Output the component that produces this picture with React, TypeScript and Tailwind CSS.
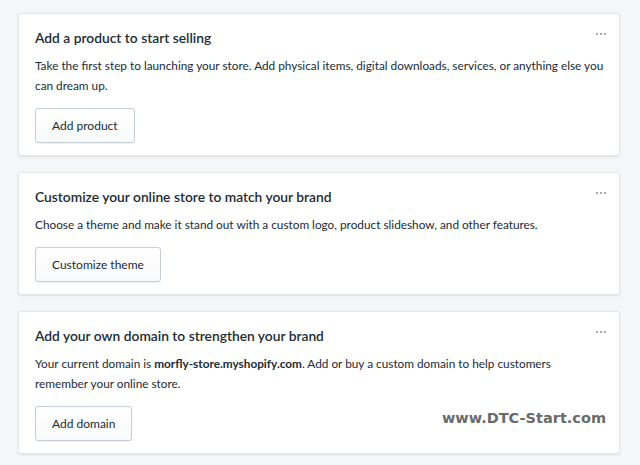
import React from "react";

interface Task {
  title: string;
  body: React.ReactNode;
  action: string;
}

const tasks: Task[] = [
  {
    title: "Add a product to start selling",
    body: "Take the first step to launching your store. Add physical items, digital downloads, services, or anything else you can dream up.",
    action: "Add product",
  },
  {
    title: "Customize your online store to match your brand",
    body: "Choose a theme and make it stand out with a custom logo, product slideshow, and other features.",
    action: "Customize theme",
  },
  {
    title: "Add your own domain to strengthen your brand",
    body: (
      <>
        Your current domain is <span className="font-bold">morfly-store.myshopify.com</span>. Add or buy a custom
        domain to help customers remember your online store.
      </>
    ),
    action: "Add domain",
  },
];

function MoreDots() {
  return (
    <svg width="12" height="4" viewBox="0 0 12 4" className="text-[#8f979f]" fill="currentColor">
      <circle cx="2" cy="2" r="1.1" />
      <circle cx="6" cy="2" r="1.1" />
      <circle cx="10" cy="2" r="1.1" />
    </svg>
  );
}

function TaskCard({ task, watermark }: { task: Task; watermark?: boolean }) {
  return (
    <div className="relative bg-white rounded-[3px] border border-[#e3e6e9] shadow-[0_1px_2px_rgba(63,63,68,0.12)] px-4 py-3">
      <div className="absolute right-[12px] top-[18px]">
        <MoreDots />
      </div>
      <h2 className="text-[13.8px] leading-6 font-semibold text-[#212b36]">{task.title}</h2>
      <p className="mt-[6px] -mr-[2px] text-[11.8px] leading-5 text-[#212b36]">{task.body}</p>
      <div className="mt-3 flex items-end justify-between">
        <button className="h-[35px] px-4 rounded-[3px] border border-[#c4cdd5] bg-gradient-to-b from-white to-[#f9fafb] text-[12px] text-[#212b36] shadow-[0_1px_0_rgba(22,29,37,0.05)]">
          {task.action}
        </button>
        {watermark && (
          <span className="mb-[11px] mr-[-3px] text-[14.5px] font-bold text-[#6a6a6a] [font-family:'DejaVu_Sans',sans-serif]">
            www.DTC-Start.com
          </span>
        )}
      </div>
    </div>
  );
}

export default function App() {
  return (
    <div className="w-[640px] h-[465px] bg-[#f4f6f8] pt-[13px] pl-[18px] pr-[20px] font-['Lato','Noto_Sans',sans-serif] overflow-hidden">
      <div className="flex flex-col gap-4">
        {tasks.map((t, i) => (
          <TaskCard key={t.action} task={t} watermark={i === 2} />
        ))}
      </div>
    </div>
  );
}
